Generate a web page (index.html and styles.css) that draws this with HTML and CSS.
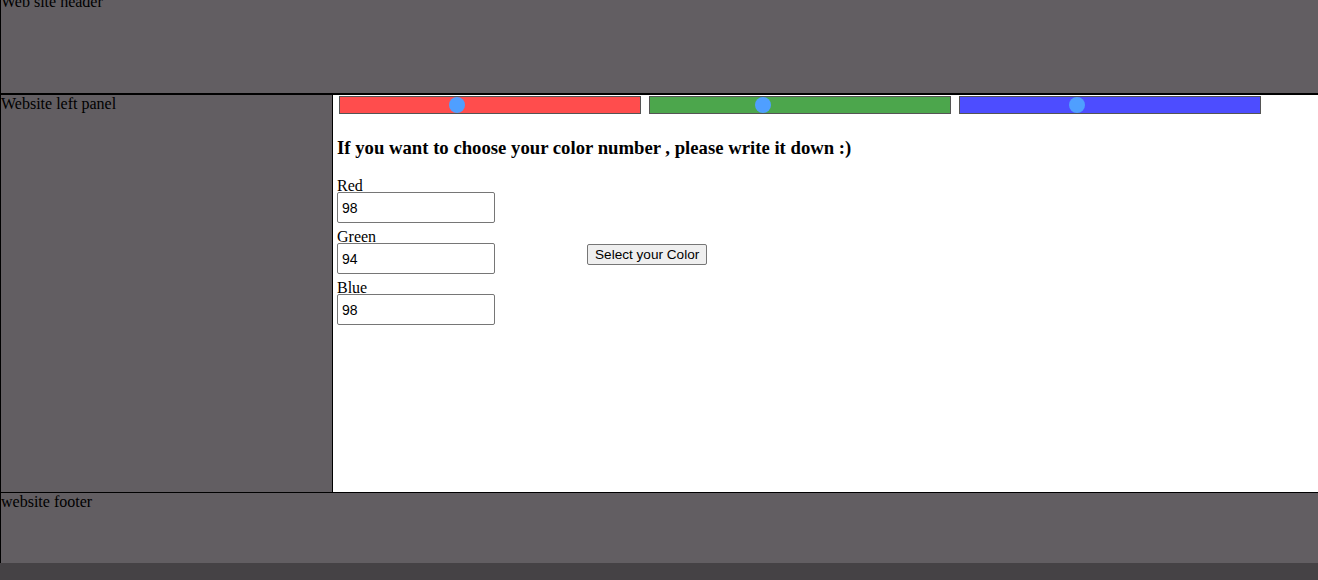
FILE: index.html
```html
<!DOCTYPE html>
<html>
<head>
<meta charset="utf-8">
<title>Color picker</title>
<link rel="stylesheet" href="styles.css">
</head>
<body>
<div class="page">
  <header class="site-header">
    <div class="header-title">Web site header</div>
  </header>
  <div class="main">
    <aside class="left-panel">Website left panel</aside>
    <section class="content">
      <div class="sliders">
        <input class="slider slider-red" type="range" min="0" max="255" value="98">
        <input class="slider slider-green" type="range" min="0" max="255" value="94">
        <input class="slider slider-blue" type="range" min="0" max="255" value="98">
      </div>
      <h3 class="title">If you want to choose your color number , please write it down :)</h3>
      <div class="form-row">
        <div class="fields">
          <label class="field-label" for="red">Red</label>
          <input class="field-input" id="red" type="text" value="98">
          <label class="field-label" for="green">Green</label>
          <input class="field-input" id="green" type="text" value="94">
          <label class="field-label" for="blue">Blue</label>
          <input class="field-input" id="blue" type="text" value="98">
        </div>
        <button class="select-btn" type="button">Select your Color</button>
      </div>
    </section>
  </div>
  <footer class="site-footer">website footer</footer>
</div>
</body>
</html>
```
FILE: styles.css
```css
html, body {
  margin: 0;
  padding: 0;
}
body {
  background: #454245;
  font-family: "Liberation Serif", "Times New Roman", serif;
  font-size: 16px;
  color: #000;
  height: 580px;
  overflow: hidden;
}
.page {
  display: flex;
  flex-direction: column;
}
.site-header {
  height: 93px;
  background: #625e62;
  border-left: 1px solid #000;
  border-bottom: 2px solid #000;
  overflow: hidden;
}
.header-title {
  margin-top: -7px;
}
.main {
  display: grid;
  grid-template-columns: 333px 1fr;
  height: 397px;
}
.left-panel {
  background: #625e62;
  border-left: 1px solid #000;
  border-right: 1px solid #000;
  box-sizing: border-box;
}
.content {
  background: #fff;
  padding-left: 4px;
}
.sliders {
  display: flex;
  gap: 8px;
  padding-left: 2px;
  margin-top: 1px;
}
.slider {
  -webkit-appearance: none;
  appearance: none;
  box-sizing: border-box;
  width: 302px;
  height: 18px;
  margin: 0;
  padding: 0;
  border: 1px solid #555;
  outline: none;
  display: block;
}
.slider::-webkit-slider-thumb {
  -webkit-appearance: none;
  appearance: none;
  width: 16px;
  height: 16px;
  border-radius: 50%;
  background: #4f9fff;
  border: none;
}
.slider-red { background: #ff4d4d; }
.slider-green { background: #4ca64c; }
.slider-blue { background: #4d4dff; }
.title {
  font-size: 18.72px;
  font-weight: bold;
  margin: 23px 0 19px;
}
.form-row {
  display: flex;
  align-items: flex-start;
}
.fields {
  display: flex;
  flex-direction: column;
  align-items: flex-start;
}
.field-label {
  display: block;
  height: 14px;
  line-height: 16px;
}
.field-input {
  box-sizing: border-box;
  width: 158px;
  height: 31px;
  margin: 0 0 6px;
  padding: 1px 4px;
  border: 1px solid #767676;
  border-radius: 2px;
  font-family: "Liberation Sans", Arial, sans-serif;
  font-size: 14px;
  color: #000;
  background: #fff;
}
.select-btn {
  margin-left: 92px;
  margin-top: 66px;
  font-family: "Liberation Sans", Arial, sans-serif;
  font-size: 13.6px;
  padding: 2px 7px;
  border: 1px solid #767676;
  border-radius: 2px;
  background: #efefef;
  color: #000;
}
.site-footer {
  height: 70px;
  background: #625e62;
  border-left: 1px solid #000;
  border-top: 1px solid #000;
}
```
